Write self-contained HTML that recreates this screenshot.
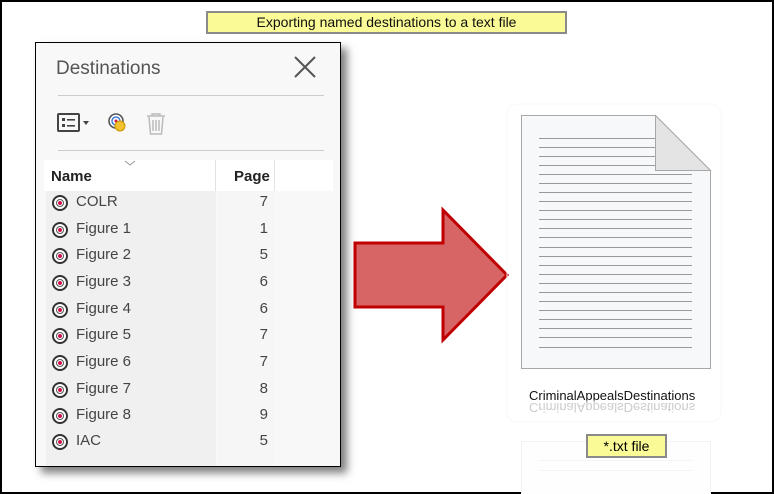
<!DOCTYPE html>
<html><head><style>
*{margin:0;padding:0;box-sizing:border-box}
body{width:774px;height:494px;background:#fff;position:relative;overflow:hidden;font-family:"Liberation Sans",sans-serif}
.frame{position:absolute;left:0;top:0;width:774px;height:494px;border:2px solid #000}
.cap{position:absolute;left:206px;top:11px;width:361px;height:23px;background:#fafa96;border:2px solid #8a8a8a;font-size:14px;text-align:center;line-height:19px;color:#111}
.panel{position:absolute;left:35px;top:42px;width:306px;height:425px;background:#f8f8f8;border:1px solid #000;box-shadow:6px 6px 8px rgba(0,0,0,.5);overflow:hidden}
.title{position:absolute;left:20px;top:15px;font-size:19px;color:#555}
.x{position:absolute;left:257px;top:12px}
.hr{position:absolute;left:22px;width:266px;height:1px;background:#ccc}
.hdr{position:absolute;left:8px;top:117px;width:289px;height:31px;background:#fff}
.hdr span{position:absolute;top:8px;font-size:15px;font-weight:bold;color:#222}
.namecol{position:absolute;left:10px;top:148px;width:170px;height:290px;background:#f0f0f0}
.pagecol{position:absolute;left:181px;top:148px;width:58px;height:290px;background:#f6f6f6}
.row{position:absolute;left:14px;height:24px;font-size:15px;color:#444;width:218px}
.row .n{position:absolute;left:26px;top:1px}
.row .p{position:absolute;right:0;top:1px;width:20px;text-align:right}
.ic{position:absolute;left:2px;top:3px;width:16px;height:16px;border-radius:50%;border:2px solid #333;background:#fff}
.ic:after{content:"";position:absolute;left:2px;top:2px;width:8px;height:8px;border-radius:50%;border:1.5px solid #555;box-sizing:border-box;background:radial-gradient(circle,#d0104a 0 1.8px,#fff 2.2px)}
.fname{position:absolute;left:529px;top:388px;font-size:13px;color:#111}
.fref{position:absolute;left:529px;top:400px;font-size:13px;color:#ccc;transform:scaleY(-1)}
.tag{position:absolute;left:586px;top:434px;width:81px;height:24px;background:#fafa96;border:2px solid #8a8a8a;font-size:14px;text-align:center;line-height:20px}
</style></head><body>
<div class="frame"></div>
<div class="cap">Exporting named destinations to a text file</div>

<div class="panel">
 <div class="title">Destinations</div>
 <svg class="x" width="24" height="24"><path d="M2 2L22 22M22 2L2 22" stroke="#555" stroke-width="2"/></svg>
 <div class="hr" style="top:52px"></div>
 <svg style="position:absolute;left:20px;top:66px" width="110" height="30">
  <rect x="2" y="5" width="21" height="17" rx="1" fill="none" stroke="#444" stroke-width="2"/>
  <rect x="6" y="9" width="3" height="3" fill="#444"/><rect x="6" y="15" width="3" height="3" fill="#444"/>
  <rect x="11" y="10" width="8" height="1.6" fill="#444"/><rect x="11" y="16" width="8" height="1.6" fill="#444"/>
  <path d="M27 12h6l-3 4z" fill="#444"/>
  <circle cx="60" cy="12" r="7" fill="#fff" stroke="#555" stroke-width="1.6"/>
  <circle cx="60" cy="12" r="4" fill="none" stroke="#3a7fd5" stroke-width="1.5"/>
  <circle cx="60" cy="12" r="1.5" fill="#d0104a"/>
  <circle cx="64" cy="17" r="5" fill="#f2c12e" stroke="#c99400"/>
  <path d="M91 7h18M96 7v-2h8v2M93 8l1.5 17h11l1.5-17M97 11v11M100 11v11M103 11v11" fill="none" stroke="#bbb" stroke-width="1.5"/>
 </svg>
 <div class="hr" style="top:107px"></div>
 <div class="namecol"></div><div class="pagecol"></div>
 <div class="hdr">
  <span style="left:7px">Name</span><span style="left:190px">Page</span>
  <div style="position:absolute;left:171px;top:0;width:1px;height:31px;background:#e2e2e2"></div>
  <div style="position:absolute;left:230px;top:0;width:1px;height:31px;background:#e2e2e2"></div>
  <svg style="position:absolute;left:80px;top:0" width="12" height="6"><path d="M1 1l5 4 5-4" fill="none" stroke="#999"/></svg>
 </div>
 <div class="row" style="top:149px"><div class="ic"></div><span class="n">COLR</span><span class="p">7</span></div>
 <div class="row" style="top:176px"><div class="ic"></div><span class="n">Figure 1</span><span class="p">1</span></div>
 <div class="row" style="top:202px"><div class="ic"></div><span class="n">Figure 2</span><span class="p">5</span></div>
 <div class="row" style="top:229px"><div class="ic"></div><span class="n">Figure 3</span><span class="p">6</span></div>
 <div class="row" style="top:256px"><div class="ic"></div><span class="n">Figure 4</span><span class="p">6</span></div>
 <div class="row" style="top:282px"><div class="ic"></div><span class="n">Figure 5</span><span class="p">7</span></div>
 <div class="row" style="top:309px"><div class="ic"></div><span class="n">Figure 6</span><span class="p">7</span></div>
 <div class="row" style="top:336px"><div class="ic"></div><span class="n">Figure 7</span><span class="p">8</span></div>
 <div class="row" style="top:362px"><div class="ic"></div><span class="n">Figure 8</span><span class="p">9</span></div>
 <div class="row" style="top:388px"><div class="ic"></div><span class="n">IAC</span><span class="p">5</span></div>
</div>

<svg style="position:absolute;left:0;top:0" width="774" height="494">
 <polygon points="355,243 443,243 443,210 507,275 443,340 443,307 355,307" fill="#d86565" stroke="#c00000" stroke-width="3"/>
 <rect x="507" y="104" width="214" height="318" rx="10" fill="none" stroke="#f8f8f8"/>
 <path d="M521.5,115.5 H655.5 L710.5,170.5 V368.5 H521.5 Z" fill="#f7f8f9" stroke="#a8a8a8"/>
 <path d="M655.5,115.5 V170.5 H710.5 Z" fill="#e4e4e4" stroke="#a8a8a8"/>
 <g stroke="#9a9a9a" stroke-width="1">
  <path d="M539 138.5H655M539 147.5H655M539 156.5H655M539 165.5H655M539 174.5H692M539 183.5H692M539 192.5H692M539 201.5H692M539 210.5H692M539 219.5H692M539 228.5H692M539 237.5H692M539 247.5H692M539 256.5H692M539 265.5H692M539 274.5H692M539 283.5H692M539 292.5H692M539 301.5H692M539 310.5H692M539 319.5H692M539 328.5H692M539 337.5H692M539 347.5H692"/>
 </g>
 <rect x="521.5" y="441.5" width="189" height="60" fill="#fefefe" stroke="#f2f2f2"/>
 <path d="M539 460.5H692M539 470.5H692" stroke="#f4f4f4"/>
</svg>
<div class="fname">CriminalAppealsDestinations</div>
<div class="fref">CriminalAppealsDestinations</div>
<div class="tag">*.txt file</div>
</body></html>
